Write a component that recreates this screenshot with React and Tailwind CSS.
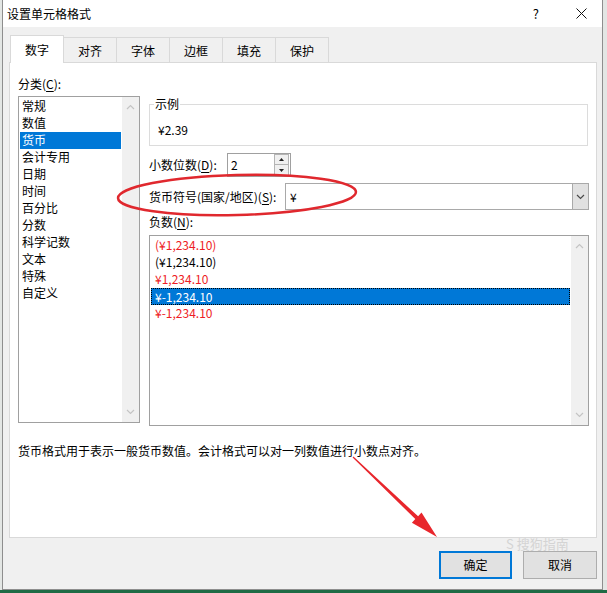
import React from 'react'

const tabs = ['数字', '对齐', '字体', '边框', '填充', '保护']

const categories = [
  '常规',
  '数值',
  '货币',
  '会计专用',
  '日期',
  '时间',
  '百分比',
  '分数',
  '科学记数',
  '文本',
  '特殊',
  '自定义',
]

const negatives = [
  { text: '(¥1,234.10)', red: true },
  { text: '(¥1,234.10)', red: false },
  { text: '¥1,234.10', red: true },
  { text: '¥-1,234.10', red: false, selected: true },
  { text: '¥-1,234.10', red: true },
]

function Chevron({ dir = 'up', color = '#c4c4c4' }) {
  return (
    <svg width="9" height="6" viewBox="0 0 9 6">
      <path
        d={dir === 'up' ? 'M1 5 L4.5 1.5 L8 5' : 'M1 1 L4.5 4.5 L8 1'}
        fill="none"
        stroke={color}
        strokeWidth="1.2"
      />
    </svg>
  )
}

function Scrollbar() {
  return (
    <div className="flex w-[17px] flex-col items-center justify-between bg-[#f0f0f0] py-[7px]">
      <Chevron dir="up" />
      <Chevron dir="down" />
    </div>
  )
}

function Key({ children }) {
  return <span className="underline underline-offset-2">{children}</span>
}

export default function App() {
  return (
    <div className="relative flex h-[593px] w-[607px] flex-col overflow-hidden bg-[#e3e6e4] font-['Noto_Sans_CJK_SC','Noto_Sans',sans-serif] text-[12px] leading-[16px] text-black">
      <div className="ml-[2px] flex h-[590px] w-[601px] flex-col border-x border-b border-[#8e8e8e] bg-[#f0f0f0]">
        {/* title bar */}
        <div className="flex h-[27px] items-center bg-white pl-[4px]">
          <span>设置单元格格式</span>
          <span className="ml-auto text-[13px]">?</span>
          <div className="ml-[37px] mr-[15px] flex">
            <svg width="11" height="11" viewBox="0 0 11 11">
              <path d="M0.5 0.5 L10.5 10.5 M10.5 0.5 L0.5 10.5" stroke="#111" strokeWidth="1" />
            </svg>
          </div>
        </div>

        <div className="flex flex-1 flex-col pl-[6px] pr-[5px] pt-[8px]">
          {/* tabs */}
          <div className="flex items-end pl-[1px]">
            {tabs.map((tab, i) =>
              i === 0 ? (
                <div
                  key={tab}
                  className="relative z-10 -mb-px flex h-[28px] w-[54px] items-center justify-center border border-b-0 border-[#d9d9d9] bg-white"
                >
                  {tab}
                </div>
              ) : (
                <div
                  key={tab}
                  className="-ml-px flex h-[25px] w-[54px] items-center justify-center border border-b-0 border-[#d9d9d9] bg-[#f0f0f0] pt-[2px]"
                >
                  {tab}
                </div>
              ),
            )}
          </div>

          {/* panel */}
          <div className="h-[476px] border border-[#d9d9d9] bg-white pl-[8px] pt-[13px]">
            <div>
              分类(<Key>C</Key>):
            </div>

            <div className="mt-[4px] flex gap-[9px]">
              <div className="flex h-[327px] w-[122px] border border-[#a0a0a0]">
                <div className="flex-1 px-px pt-px">
                  {categories.map((c) => (
                    <div
                      key={c}
                      className={
                        c === '货币'
                          ? 'h-[17px] bg-[#0078d7] pl-[2px] text-white'
                          : 'h-[17px] pl-[2px]'
                      }
                    >
                      {c}
                    </div>
                  ))}
                </div>
                <Scrollbar />
              </div>

              <div className="flex w-[440px] flex-col">
                <div className="relative mt-[8px] h-[42px] w-[439px] border border-[#dcdcdc] pl-[8px] pt-[17px]">
                  <span className="absolute left-[4px] top-[-9px] bg-white px-px">示例</span>
                  ¥2.39
                </div>

                <div className="mt-[7px] flex h-[24px] items-center">
                  <div className="w-[78px]">
                    小数位数(<Key>D</Key>):
                  </div>
                  <div className="flex h-[24px] w-[64px] items-center border border-[#a0a0a0] pl-[3px]">
                    <span>2</span>
                    <div className="ml-auto mr-px flex flex-col">
                      <div className="flex h-[11px] w-[15px] items-center justify-center border border-[#b4b4b4] bg-[#f0f0f0]">
                        <svg width="5" height="3" viewBox="0 0 5 3">
                          <path d="M0 3 L2.5 0 L5 3 Z" fill="#222" />
                        </svg>
                      </div>
                      <div className="-mt-px flex h-[12px] w-[15px] items-center justify-center border border-[#b4b4b4] bg-[#f0f0f0]">
                        <svg width="5" height="3" viewBox="0 0 5 3">
                          <path d="M0 0 L2.5 3 L5 0 Z" fill="#222" />
                        </svg>
                      </div>
                    </div>
                  </div>
                </div>

                <div className="mt-[6px] flex h-[27px] items-center">
                  <div className="w-[136px]">
                    货币符号(国家/地区)(<Key>S</Key>):
                  </div>
                  <div className="flex h-[27px] w-[304px] items-center border border-[#a9a9a9] pl-[4px]">
                    <span>¥</span>
                    <div className="ml-auto flex h-full w-[16px] items-center justify-center border-l border-[#a9a9a9] bg-[#e1e1e1]">
                      <Chevron dir="down" color="#4a4a4a" />
                    </div>
                  </div>
                </div>

                <div className="mt-[4px]">
                  负数(<Key>N</Key>):
                </div>

                <div className="mt-[5px] flex h-[191px] w-[440px] border border-[#a0a0a0]">
                  <div className="flex-1 px-px pt-px">
                    {negatives.map((n, i) => (
                      <div
                        key={i}
                        className={
                          n.selected
                            ? 'h-[17px] border border-dotted border-black bg-[#0078d7] pl-[3px] leading-[15px] text-white'
                            : n.red
                              ? 'h-[17px] pl-[4px] text-[#ee1c25]'
                              : 'h-[17px] pl-[4px]'
                        }
                      >
                        {n.text}
                      </div>
                    ))}
                  </div>
                  <Scrollbar />
                </div>
              </div>
            </div>

            <p className="mt-[17px]">
              货币格式用于表示一般货币数值。会计格式可以对一列数值进行小数点对齐。
            </p>
          </div>

          {/* footer */}
          <div className="flex justify-end gap-[11px] pt-[13px]">
            <button
              type="button"
              className="flex h-[28px] w-[73px] items-center justify-center border-2 border-[#0078d7] bg-[#e1e1e1]"
            >
              确定
            </button>
            <button
              type="button"
              className="flex h-[28px] w-[74px] items-center justify-center border border-[#adadad] bg-[#e1e1e1]"
            >
              取消
            </button>
          </div>
        </div>
      </div>
      <div className="h-[3px] bg-[#1f6b45]" />

      {/* watermark */}
      <div className="pointer-events-none absolute left-[506px] top-[536px] text-[13px] leading-[15px] text-[#d4d4d4]">
        S 搜狗指南
      </div>

      {/* annotations */}
      <svg
        className="pointer-events-none absolute left-0 top-0"
        width="607"
        height="593"
        viewBox="0 0 607 593"
      >
        <ellipse
          cx="237"
          cy="195"
          rx="119"
          ry="20"
          transform="rotate(-1.5 237 195)"
          fill="none"
          stroke="#e0282e"
          strokeWidth="2.5"
        />
        <polygon
          points="353.4,456.6 418.1,516.3 421.5,512.6 437,537 411.9,522.8 415.3,519.1 352.6,457.4"
          fill="#e8262c"
        />
      </svg>
    </div>
  )
}
